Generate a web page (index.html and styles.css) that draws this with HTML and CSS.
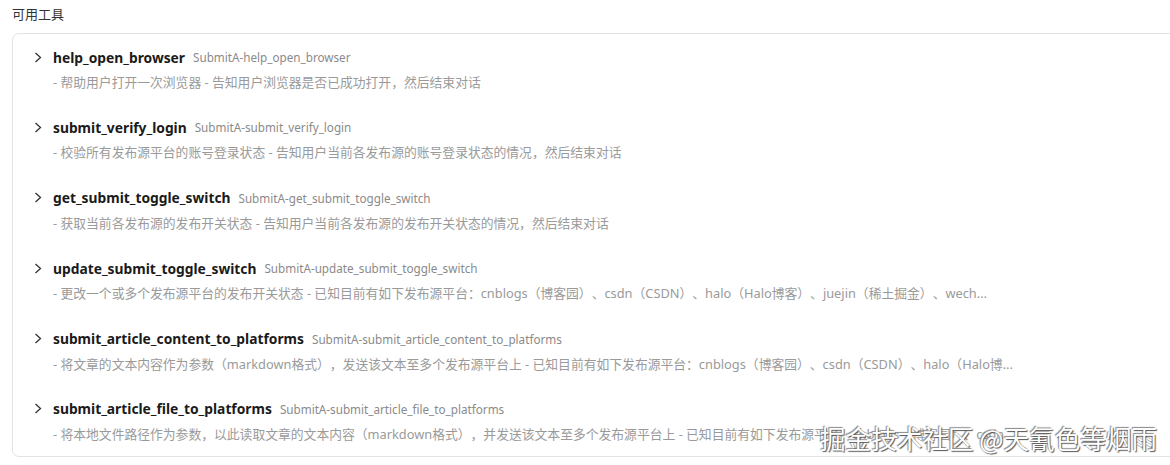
FILE: index.html
```html
<!DOCTYPE html>
<html lang="zh-CN">
<head>
<meta charset="UTF-8" />
<title>可用工具</title>
<link rel="stylesheet" href="styles.css">
</head>
<body>

<div class="titulo">可用工具</div>

<div class="lista">
  <div class="item">
    <div class="linha">
      <svg class="seta" width="8" height="11" viewBox="0 0 8 11"><polyline points="1.5,1 6.5,5.5 1.5,10" fill="none" stroke="#333" stroke-width="1.3"/></svg>
      <span class="nome">help_open_browser</span>
      <span class="id">SubmitA-help_open_browser</span>
    </div>
    <div class="desc">- 帮助用户打开一次浏览器 - 告知用户浏览器是否已成功打开，然后结束对话</div>
  </div>

  <div class="item">
    <div class="linha">
      <svg class="seta" width="8" height="11" viewBox="0 0 8 11"><polyline points="1.5,1 6.5,5.5 1.5,10" fill="none" stroke="#333" stroke-width="1.3"/></svg>
      <span class="nome">submit_verify_login</span>
      <span class="id">SubmitA-submit_verify_login</span>
    </div>
    <div class="desc">- 校验所有发布源平台的账号登录状态 - 告知用户当前各发布源的账号登录状态的情况，然后结束对话</div>
  </div>

  <div class="item">
    <div class="linha">
      <svg class="seta" width="8" height="11" viewBox="0 0 8 11"><polyline points="1.5,1 6.5,5.5 1.5,10" fill="none" stroke="#333" stroke-width="1.3"/></svg>
      <span class="nome">get_submit_toggle_switch</span>
      <span class="id">SubmitA-get_submit_toggle_switch</span>
    </div>
    <div class="desc">- 获取当前各发布源的发布开关状态 - 告知用户当前各发布源的发布开关状态的情况，然后结束对话</div>
  </div>

  <div class="item">
    <div class="linha">
      <svg class="seta" width="8" height="11" viewBox="0 0 8 11"><polyline points="1.5,1 6.5,5.5 1.5,10" fill="none" stroke="#333" stroke-width="1.3"/></svg>
      <span class="nome">update_submit_toggle_switch</span>
      <span class="id">SubmitA-update_submit_toggle_switch</span>
    </div>
    <div class="desc">- 更改一个或多个发布源平台的发布开关状态 - 已知目前有如下发布源平台：cnblogs（博客园）、csdn（CSDN）、halo（Halo博客）、juejin（稀土掘金）、wech...</div>
  </div>

  <div class="item">
    <div class="linha">
      <svg class="seta" width="8" height="11" viewBox="0 0 8 11"><polyline points="1.5,1 6.5,5.5 1.5,10" fill="none" stroke="#333" stroke-width="1.3"/></svg>
      <span class="nome">submit_article_content_to_platforms</span>
      <span class="id">SubmitA-submit_article_content_to_platforms</span>
    </div>
    <div class="desc">- 将文章的文本内容作为参数（markdown格式），发送该文本至多个发布源平台上 - 已知目前有如下发布源平台：cnblogs（博客园）、csdn（CSDN）、halo（Halo博...</div>
  </div>

  <div class="item">
    <div class="linha">
      <svg class="seta" width="8" height="11" viewBox="0 0 8 11"><polyline points="1.5,1 6.5,5.5 1.5,10" fill="none" stroke="#333" stroke-width="1.3"/></svg>
      <span class="nome">submit_article_file_to_platforms</span>
      <span class="id">SubmitA-submit_article_file_to_platforms</span>
    </div>
    <div class="desc">- 将本地文件路径作为参数，以此读取文章的文本内容（markdown格式），并发送该文本至多个发布源平台上 - 已知目前有如下发布源平台：cnblogs（博客园）、csdn...</div>
  </div>
</div>

<div class="marca">掘金技术社区 @天氰色等烟雨</div>

</body>
</html>
```

FILE: styles.css
```css
body {
  margin: 0;
  padding: 0 0 0 12px;
  font-family: "Noto Sans", "Noto Sans CJK SC", sans-serif;
  background: #fff;
  color: #222;
  overflow: hidden;
  position: relative;
  height: 465px;
  text-spacing-trim: space-all;
}
.titulo {
  font-size: 13px;
  color: #333;
  height: 33px;
  line-height: 28px;
}
.lista {
  width: 1180px;
  border: 1px solid #e3e3e3;
  border-radius: 7px;
  padding: 13px 0 0 21px;
  box-sizing: border-box;
}
.item {
  height: 70.4px;
}
.item:last-child {
  height: 57px;
}
.linha {
  display: flex;
  align-items: center;
  height: 20px;
}
.seta {
  margin-right: 11px;
}
.nome {
  font-weight: bold;
  font-size: 13.8px;
  color: #1a1a1a;
}
.id {
  margin-left: 8px;
  font-size: 11.7px;
  color: #8a8a8a;
}
.desc {
  margin-top: 6px;
  padding-left: 19px;
  font-size: 12.8px;
  line-height: 18px;
  color: #9a9a9a;
  white-space: nowrap;
}
.marca {
  position: absolute;
  left: 820px;
  top: 419px;
  font-size: 25.6px;
  color: #fff;
  font-family: "Noto Sans CJK SC", sans-serif;
  text-shadow: 1px 1px 1px #555, -1px -1px 1px #888;
  white-space: nowrap;
}
```
